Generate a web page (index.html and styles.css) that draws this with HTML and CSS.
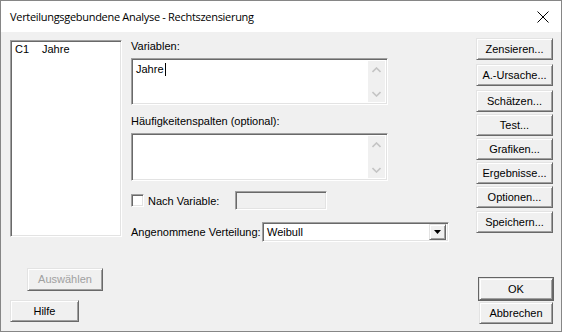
FILE: index.html
```html
<!DOCTYPE html>
<html>
<head>
<meta charset="utf-8">
<link rel="stylesheet" href="styles.css">
</head>
<body>
<div class="window">
  <div class="titlebar">
    <span class="title">Verteilungsgebundene Analyse - Rechtszensierung</span>
    <svg class="close" width="12" height="12" viewBox="0 0 12 12"><path d="M0.5 0.5 L11.5 11.5 M11.5 0.5 L0.5 11.5" stroke="#000" stroke-width="1" fill="none"/></svg>
  </div>
  <div class="content">
    <div class="leftcol">
      <div class="listbox sunken">
        <div class="listrow"><span class="colid">C1</span><span>Jahre</span></div>
      </div>
      <div class="btn btn-select disabled">Auswählen</div>
      <div class="btn btn-help">Hilfe</div>
    </div>
    <div class="midcol">
      <div class="label">Variablen:</div>
      <div class="memo sunken">
        <div class="memo-text">Jahre<span class="caret"></span></div>
        <div class="scroll">
          <svg width="9" height="6" viewBox="0 0 9 6"><path d="M0.5 5 L4.5 1 L8.5 5" stroke="#c4c4c4" stroke-width="1.6" fill="none"/></svg>
          <svg width="9" height="6" viewBox="0 0 9 6"><path d="M0.5 1 L4.5 5 L8.5 1" stroke="#c4c4c4" stroke-width="1.6" fill="none"/></svg>
        </div>
      </div>
      <div class="label label2">Häufigkeitenspalten (optional):</div>
      <div class="memo memo2 sunken">
        <div class="memo-text"></div>
        <div class="scroll">
          <svg width="9" height="6" viewBox="0 0 9 6"><path d="M0.5 5 L4.5 1 L8.5 5" stroke="#c4c4c4" stroke-width="1.6" fill="none"/></svg>
          <svg width="9" height="6" viewBox="0 0 9 6"><path d="M0.5 1 L4.5 5 L8.5 1" stroke="#c4c4c4" stroke-width="1.6" fill="none"/></svg>
        </div>
      </div>
      <div class="checkrow">
        <span class="checkbox sunken"></span>
        <span class="checklabel">Nach Variable:</span>
        <span class="field-disabled sunken"></span>
      </div>
      <div class="comborow">
        <span class="combolabel">Angenommene Verteilung:</span>
        <div class="combo sunken">
          <span class="combo-text">Weibull</span>
          <span class="combo-btn">
            <svg width="7" height="4" viewBox="0 0 7 4"><path d="M0 0 H7 L3.5 4 Z" fill="#000"/></svg>
          </span>
        </div>
      </div>
    </div>
    <div class="rightcol">
      <div class="btnstack">
        <div class="btn side">Zensieren...</div>
        <div class="btn side wide">A.-Ursache...</div>
        <div class="btn side wide">Schätzen...</div>
        <div class="btn side">Test...</div>
        <div class="btn side">Grafiken...</div>
        <div class="btn side">Ergebnisse...</div>
        <div class="btn side">Optionen...</div>
        <div class="btn side wide1">Speichern...</div>
      </div>
      <div class="okstack">
        <div class="btn ok default">OK</div>
        <div class="btn ok">Abbrechen</div>
      </div>
    </div>
  </div>
</div>
</body>
</html>
```
FILE: styles.css
```css
* { box-sizing: border-box; }
html, body { margin: 0; padding: 0; }
body {
  width: 562px;
  height: 332px;
  overflow: hidden;
  background: #f0f0f0;
  font-family: "Liberation Sans", Arial, sans-serif;
  font-size: 11px;
  color: #000;
}
.window {
  width: 562px;
  height: 332px;
  border: 1px solid #868686;
  display: flex;
  flex-direction: column;
  background: #f0f0f0;
}
.titlebar {
  height: 31px;
  background: #fff;
  display: flex;
  align-items: center;
  padding-left: 9px;
  padding-right: 12px;
  flex: none;
}
.title {
  font-family: "Open Sans", "Liberation Sans", sans-serif;
  font-size: 11px;
  letter-spacing: -0.3px;
  flex: 1;
  padding-bottom: 1px;
}
.close { display: block; }
.content {
  flex: 1;
  display: flex;
  padding: 8px 8px 8px 9px;
}
.sunken {
  background: #fff;
  border-top: 1px solid #a0a0a0;
  border-left: 1px solid #a0a0a0;
  border-bottom: 1px solid #fff;
  border-right: 1px solid #fff;
  box-shadow: inset 1px 1px 0 #696969, inset -1px -1px 0 #e3e3e3;
}
.leftcol {
  width: 112px;
  display: flex;
  flex-direction: column;
  flex: none;
}
.listbox {
  height: 197px;
  padding: 2px 4px;
}
.listrow { display: flex; line-height: 13px; }
.colid { width: 27px; }
.btn {
  background: #f0f0f0;
  border-top: 1px solid #e3e3e3;
  border-left: 1px solid #e3e3e3;
  border-bottom: 1px solid #696969;
  border-right: 1px solid #696969;
  box-shadow: inset 1px 1px 0 #fff, inset -1px -1px 0 #a0a0a0;
  display: flex;
  align-items: center;
  justify-content: center;
  height: 22px;
  line-height: 13px;
}
.btn.disabled { color: #a0a0a0; }
.btn-select {
  margin-top: 31px;
  margin-left: 17px;
  width: 76px;
  height: 23px;
}
.btn-help {
  margin-top: 9px;
  width: 69px;
}
.midcol {
  margin-left: 9px;
  width: 318px;
  flex: none;
  display: flex;
  flex-direction: column;
}
.label {
  height: 13px;
  line-height: 13px;
}
.label2 { margin-top: 10px; }
.memo {
  margin-top: 5px;
  width: 257px;
  height: 47px;
  display: flex;
  padding: 2px;
}
.memo2 { height: 48px; }
.memo-text {
  flex: 1;
  padding: 2px 2px;
  line-height: 13px;
  display: flex;
  align-items: flex-start;
}
.caret {
  display: inline-block;
  width: 1px;
  height: 13px;
  background: #000;
  margin-left: 1px;
}
.scroll {
  width: 17px;
  background: #f0f0f0;
  display: flex;
  flex-direction: column;
  align-items: center;
  justify-content: space-between;
  padding: 6px 0 5px;
}
.scroll svg { display: block; }
.checkrow {
  margin-top: 10px;
  height: 19px;
  display: flex;
  align-items: center;
}
.checkbox {
  width: 13px;
  height: 13px;
  display: block;
}
.checklabel {
  margin-left: 4px;
  width: 87px;
}
.field-disabled {
  background: #f0f0f0;
  width: 92px;
  height: 19px;
  display: block;
}
.comborow {
  margin-top: 12px;
  height: 20px;
  display: flex;
  align-items: center;
}
.combolabel { width: 131px; }
.combo {
  width: 187px;
  height: 20px;
  display: flex;
  align-items: center;
  padding: 2px;
}
.combo-text { flex: 1; padding-left: 2px; }
.combo-btn {
  width: 17px;
  height: 16px;
  background: #f0f0f0;
  border-top: 1px solid #e3e3e3;
  border-left: 1px solid #e3e3e3;
  border-bottom: 1px solid #696969;
  border-right: 1px solid #696969;
  box-shadow: inset 1px 1px 0 #fff, inset -1px -1px 0 #a0a0a0;
  display: flex;
  align-items: center;
  justify-content: center;
}
.combo-btn svg { display: block; }
.rightcol {
  margin-left: auto;
  width: 77px;
  display: flex;
  flex-direction: column;
  align-items: flex-end;
  justify-content: space-between;
  margin-top: -2px;
}
.btnstack {
  display: flex;
  flex-direction: column;
  gap: 2px;
}
.btn.side { width: 77px; }
.btn.side.wide { margin-top: 2px; }
.btn.side.wide1 { margin-top: 1px; }
.okstack {
  display: flex;
  flex-direction: column;
  gap: 2px;
  margin-bottom: -1px;
}
.btn.ok { width: 74px; }
.btn.default {
  outline: 1px solid #646464;
  outline-offset: 0;
}
```
